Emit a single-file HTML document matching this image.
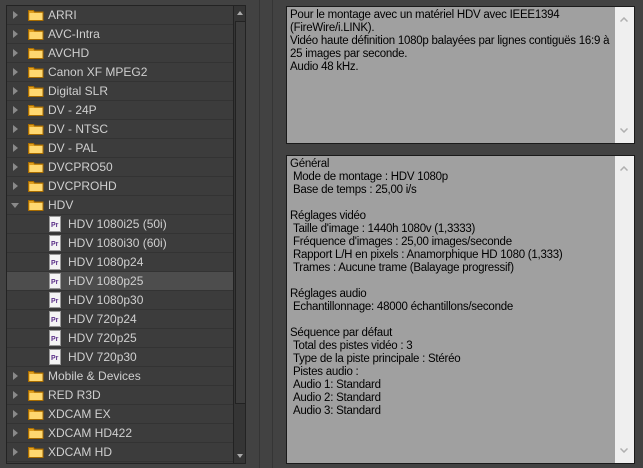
<!DOCTYPE html>
<html><head><meta charset="utf-8"><style>
*{margin:0;padding:0;box-sizing:border-box}
body{width:643px;height:468px;background:#424242;position:relative;overflow:hidden;font-family:"Liberation Sans",sans-serif}
.list{position:absolute;left:6px;top:5px;width:240px;height:459px;border:1px solid #232323;background:#3c3c3c;overflow:hidden}
.row{position:absolute;left:0;width:227px;height:19px;border-bottom:1px solid #333;color:#cfcfcf;font-size:12px;line-height:18px}
.row.sel{background:#4d4d4d}
.arr{position:absolute;left:6px;top:5px;width:0;height:0;border-top:4px solid transparent;border-bottom:4px solid transparent;border-left:5px solid #8a8a8a}
.arr.open{left:4px;top:7px;border-left:4px solid transparent;border-right:4px solid transparent;border-top:5px solid #8a8a8a;border-bottom:0}
.fold{position:absolute;left:21px;top:3px;width:16px;height:12px}
.doc{position:absolute;left:42px;top:1px;width:12px;height:16px;background:#f4f4f4;border:1px solid #999}
.doc:after{content:"Pr";position:absolute;left:1px;top:5px;font-size:7px;line-height:8px;color:#5a2f88;font-weight:bold}
.lbl{position:absolute;left:41px;top:0}
.lbl2{position:absolute;left:61px;top:0}
.sb{position:absolute;left:226px;top:0;width:13px;height:457px;background:#353535;border-left:1px solid #222}
.thumb{position:absolute;left:1px;top:15px;width:11px;height:383px;background:#3d3d3d;border:1px solid #222}
.box{position:absolute;left:286px;width:349px;border:1px solid #1a1a1a;background:#a0a0a0;font-size:11.5px;line-height:13px;color:#000;padding:2px 3px;white-space:nowrap;letter-spacing:-0.25px}
.vs{position:absolute;right:0;top:0;bottom:0;width:19px;background:#efefef}
.vs svg{position:absolute;left:5px}
</style></head><body>
<div style="position:absolute;left:259px;top:0;width:1px;height:468px;background:#353535"></div>
<div style="position:absolute;left:272px;top:0;width:1px;height:468px;background:#353535"></div>
<div class="list"></div>
<script>
var items=[["f","ARRI"],["f","AVC-Intra"],["f","AVCHD"],["f","Canon XF MPEG2"],["f","Digital SLR"],["f","DV - 24P"],["f","DV - NTSC"],["f","DV - PAL"],["f","DVCPRO50"],["f","DVCPROHD"],["o","HDV"],["p","HDV 1080i25 (50i)"],["p","HDV 1080i30 (60i)"],["p","HDV 1080p24"],["s","HDV 1080p25"],["p","HDV 1080p30"],["p","HDV 720p24"],["p","HDV 720p25"],["p","HDV 720p30"],["f","Mobile &amp; Devices"],["f","RED R3D"],["f","XDCAM EX"],["f","XDCAM HD422"],["f","XDCAM HD"]];
var fold='<svg class="fold" viewBox="0 0 16 12"><path d="M0.5 1.5h5l1 1.5h8.5v8.5h-14.5z" fill="#e0a020" stroke="#a86c00"/><rect x="1.5" y="4" width="13" height="7" fill="#ffd870"/></svg>';
var h='';
items.forEach(function(it,i){var t=i*19;
if(it[0]=="f")h+='<div class="row" style="top:'+t+'px"><div class="arr"></div>'+fold+'<span class="lbl">'+it[1]+'</span></div>';
else if(it[0]=="o")h+='<div class="row" style="top:'+t+'px"><div class="arr open"></div>'+fold+'<span class="lbl">'+it[1]+'</span></div>';
else h+='<div class="row'+(it[0]=="s"?" sel":"")+'" style="top:'+t+'px"><div class="doc"></div><span class="lbl2">'+it[1]+'</span></div>';});
h+='<div class="sb"><div style="position:absolute;left:3px;top:5px;border-left:3px solid transparent;border-right:3px solid transparent;border-bottom:4px solid #aaa"></div><div class="thumb"></div><div style="position:absolute;left:3px;bottom:5px;border-left:3px solid transparent;border-right:3px solid transparent;border-top:4px solid #aaa"></div></div>';
document.querySelector('.list').innerHTML=h;
</script>
<div class="box" style="top:6px;height:138px">Pour le montage avec un matériel HDV avec IEEE1394<br>(FireWire/i.LINK).<br>Vidéo haute définition 1080p balayées par lignes contiguës 16:9 à<br>25 images par seconde.<br>Audio 48 kHz.<div class="vs"><svg style="top:10px" width="8" height="5"><path d="M0.5 4.5L4 1L7.5 4.5" fill="none" stroke="#b0b0b0" stroke-width="1.5"/></svg><svg style="bottom:10px" width="8" height="5"><path d="M0.5 0.5L4 4L7.5 0.5" fill="none" stroke="#b0b0b0" stroke-width="1.5"/></svg></div></div>
<div class="box" style="top:155px;height:309px">Général<br>&nbsp;Mode de montage : HDV 1080p<br>&nbsp;Base de temps : 25,00 i/s<br><br>Réglages vidéo<br>&nbsp;Taille d'image : 1440h 1080v (1,3333)<br>&nbsp;Fréquence d'images : 25,00 images/seconde<br>&nbsp;Rapport L/H en pixels : Anamorphique HD 1080 (1,333)<br>&nbsp;Trames : Aucune trame (Balayage progressif)<br><br>Réglages audio<br>&nbsp;Echantillonnage: 48000 échantillons/seconde<br><br>Séquence par défaut<br>&nbsp;Total des pistes vidéo : 3<br>&nbsp;Type de la piste principale : Stéréo<br>&nbsp;Pistes audio :<br>&nbsp;Audio 1: Standard<br>&nbsp;Audio 2: Standard<br>&nbsp;Audio 3: Standard<div class="vs"><svg style="top:10px" width="8" height="5"><path d="M0.5 4.5L4 1L7.5 4.5" fill="none" stroke="#b0b0b0" stroke-width="1.5"/></svg><svg style="bottom:10px" width="8" height="5"><path d="M0.5 0.5L4 4L7.5 0.5" fill="none" stroke="#b0b0b0" stroke-width="1.5"/></svg></div></div>
</body></html>
